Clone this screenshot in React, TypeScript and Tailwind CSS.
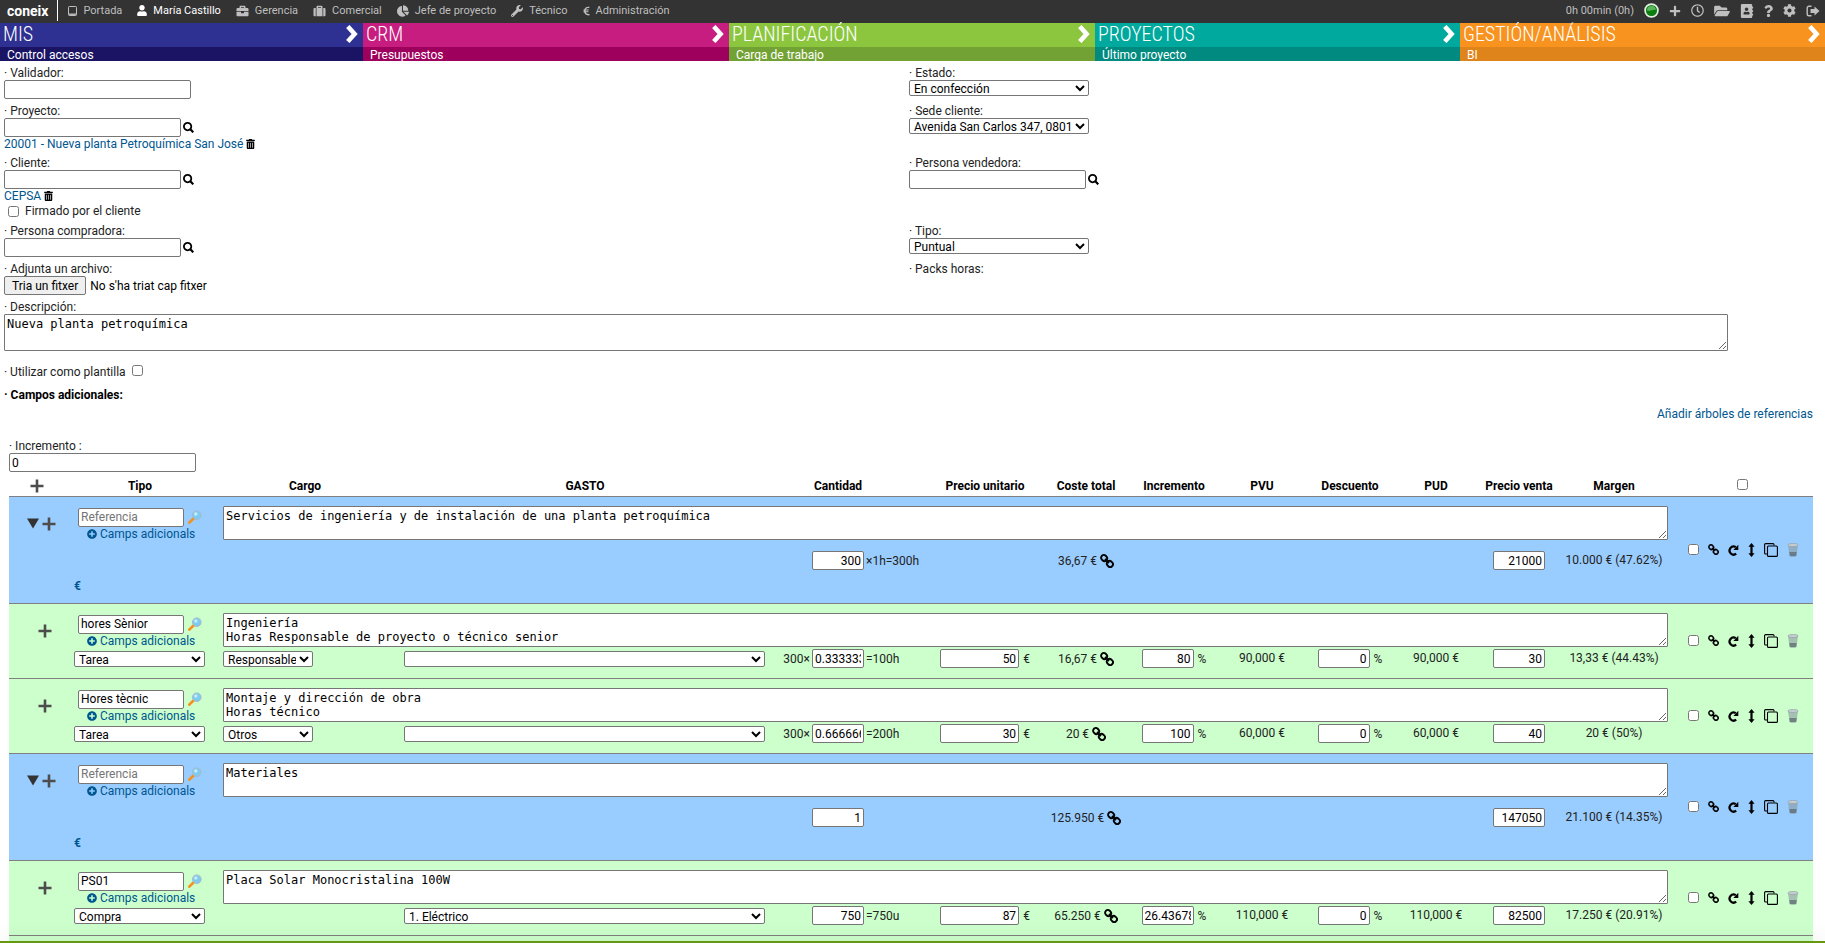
import { useRef, useState } from "react"
import type { ReactNode } from "react"
import {
  FaAddressBook,
  FaBriefcase,
  FaChartPie,
  FaCog,
  FaEuroSign,
  FaFolderOpen,
  FaPlus,
  FaPlusCircle,
  FaQuestion,
  FaRegClock,
  FaSuitcase,
  FaTrashAlt,
  FaUser,
  FaWrench,
} from "react-icons/fa"

const inputClass = "h-[19px] rounded-[2px] border border-[#767676] bg-white px-[2px] text-[12px] text-black"
const selectClass = "h-4 rounded-[2px] border border-[#767676] bg-white text-[12px] leading-[14px] text-black"
const areaClass =
  "block rounded-[1px] border border-[#767676] bg-white p-[2px] font-['DejaVu_Sans_Mono',monospace] text-[12px] leading-[14px] text-black"
const linkClass = "text-[#00568f]"

const navItems = [
  { label: "Portada", icon: <TabletIcon /> },
  { label: "María Castillo", icon: <FaUser className="h-[11px] w-[10px]" />, active: true },
  { label: "Gerencia", icon: <FaBriefcase className="h-3 w-[13px]" /> },
  { label: "Comercial", icon: <FaSuitcase className="h-3 w-[13px]" /> },
  { label: "Jefe de proyecto", icon: <FaChartPie className="h-3 w-3" /> },
  { label: "Técnico", icon: <FaWrench className="h-3 w-3" /> },
  { label: "Administración", icon: <FaEuroSign className="h-[10px] w-[7px]" /> },
]

const sections = [
  { title: "MIS", sub: "Control accesos", top: "bg-[#2e3192]", bottom: "bg-[#1b1464]" },
  { title: "CRM", sub: "Presupuestos", top: "bg-[#c71c80]", bottom: "bg-[#9e005d]" },
  { title: "PLANIFICACIÓN", sub: "Carga de trabajo", top: "bg-[#8cc63f]", bottom: "bg-[#73a234]" },
  { title: "PROYECTOS", sub: "Último proyecto", top: "bg-[#00a99d]", bottom: "bg-[#008a80]" },
  { title: "GESTIÓN/ANÁLISIS", sub: "BI", top: "bg-[#f7931e]", bottom: "bg-[#df831b]" },
]

type Line = {
  id: string
  group?: boolean
  reference: string
  text: string
  type?: string
  role?: string
  expense?: string
  before?: string
  quantity: string
  after?: string
  unitPrice?: string
  cost: string
  increment?: string
  pvu?: string
  discount?: string
  pud?: string
  price: string
  margin: string
}

const lines: Line[] = [
  {
    id: "l1",
    group: true,
    reference: "",
    text: "Servicios de ingeniería y de instalación de una planta petroquímica",
    quantity: "300",
    after: "×1h=300h",
    cost: "36,67 €",
    price: "21000",
    margin: "10.000 € (47.62%)",
  },
  {
    id: "l2",
    reference: "hores Sènior",
    text: "Ingeniería\nHoras Responsable de proyecto o técnico senior",
    type: "Tarea",
    role: "Responsable",
    expense: "",
    before: "300×",
    quantity: "0.33333333",
    after: "=100h",
    unitPrice: "50",
    cost: "16,67 €",
    increment: "80",
    pvu: "90,000 €",
    discount: "0",
    pud: "90,000 €",
    price: "30",
    margin: "13,33 € (44.43%)",
  },
  {
    id: "l3",
    reference: "Hores tècnic",
    text: "Montaje y dirección de obra\nHoras técnico",
    type: "Tarea",
    role: "Otros",
    expense: "",
    before: "300×",
    quantity: "0.66666667",
    after: "=200h",
    unitPrice: "30",
    cost: "20 €",
    increment: "100",
    pvu: "60,000 €",
    discount: "0",
    pud: "60,000 €",
    price: "40",
    margin: "20 € (50%)",
  },
  {
    id: "l4",
    group: true,
    reference: "",
    text: "Materiales",
    quantity: "1",
    cost: "125.950 €",
    price: "147050",
    margin: "21.100 € (14.35%)",
  },
  {
    id: "l5",
    reference: "PS01",
    text: "Placa Solar Monocristalina 100W",
    type: "Compra",
    expense: "1. Eléctrico",
    quantity: "750",
    after: "=750u",
    unitPrice: "87",
    cost: "65.250 €",
    increment: "26.43678161",
    pvu: "110,000 €",
    discount: "0",
    pud: "110,000 €",
    price: "82500",
    margin: "17.250 € (20.91%)",
  },
]

function TabletIcon() {
  return (
    <svg viewBox="0 0 9 10" className="h-[10px] w-[9px]" fill="none" stroke="currentColor">
      <rect x="0.5" y="0.5" width="8" height="9" rx="0.8" />
      <path d="M1 8.2h7" strokeWidth="1.4" />
    </svg>
  )
}

function SignOutIcon() {
  return (
    <svg viewBox="0 0 14 12" className="h-3 w-[14px]" fill="none" stroke="currentColor">
      <path d="M5.5 1.2H3A1.8 1.8 0 0 0 1.2 3v6A1.8 1.8 0 0 0 3 10.8h2.5" strokeWidth="1.4" />
      <path d="M8.5 1.5 13.5 6l-5 4.5V8H4.5V4h4z" fill="currentColor" stroke="none" />
    </svg>
  )
}

function PlusIcon() {
  return (
    <svg viewBox="0 0 14 14" className="h-[14px] w-[14px]" stroke="#4d4d4d" strokeWidth="2.6">
      <path d="M7 0.5v13M0.5 7h13" />
    </svg>
  )
}

function ChevronIcon() {
  return (
    <svg viewBox="0 0 12 18" className="h-[18px] w-3" fill="none" stroke="white" strokeWidth="4.6">
      <path d="M1.800 1.500 8.600 9l-6.800 7.500" />
    </svg>
  )
}

function SearchIcon() {
  return (
    <svg viewBox="0 0 11 11" className="h-[11px] w-[11px]" fill="none" stroke="black">
      <circle cx="4.600" cy="4.600" r="3.700" strokeWidth="1.800" />
      <path d="m7.300 7.300 3 3" strokeWidth="2.200" />
    </svg>
  )
}

function MagnifierIcon() {
  return (
    <svg viewBox="0 0 14 14" className="h-[14px] w-[14px] shrink-0">
      <path d="M1.300 12.700 5.500 8.500" stroke="#f5901d" strokeWidth="2.600" strokeLinecap="round" />
      <circle cx="8.800" cy="5.200" r="4.300" fill="#7ccbf0" stroke="#a9b9c6" strokeWidth="1" />
      <circle cx="7.800" cy="4" r="1.700" fill="#c6ecfb" />
    </svg>
  )
}

function ChainIcon({ className }: { className: string }) {
  return (
    <svg viewBox="0 0 14 14" className={className} fill="none" stroke="black" strokeWidth="1.9">
      <rect x="1" y="1.300" width="6.200" height="5.400" rx="2.600" transform="rotate(45 4.100 4)" />
      <rect x="6.800" y="7.300" width="6.200" height="5.400" rx="2.600" transform="rotate(45 9.900 10)" />
      <path d="m5 5 4 4" />
    </svg>
  )
}

function RefreshIcon() {
  return (
    <svg viewBox="0 0 11 12" className="h-3 w-[11px]" fill="none" stroke="black" strokeWidth="2.2">
      <path d="M8.200 9.600A4 4 0 1 1 7.800 3.200" />
      <path d="M10.300 0.800v5.200H5.400z" fill="black" stroke="none" />
    </svg>
  )
}

function MoveIcon() {
  return (
    <svg viewBox="0 0 7 14" className="h-[14px] w-[7px]">
      <path d="M3.500 0 6.600 3.800H4.600v6.400h2L3.500 14 .4 10.200h2V3.800h-2z" />
    </svg>
  )
}

function CopyIcon() {
  return (
    <svg viewBox="0 0 14 14" className="h-[14px] w-[14px]" fill="none" stroke="black" strokeWidth="1.1">
      <path d="M3 11H1.600a1 1 0 0 1-1-1V1.600a1 1 0 0 1 1-1h7.400a1 1 0 0 1 1 1v.9" />
      <rect x="3.500" y="3" width="9.900" height="10.400" rx="1" />
    </svg>
  )
}

function BinIcon() {
  return (
    <svg viewBox="0 0 12 14" className="h-[14px] w-3">
      <path d="M1 2h10L9.500 13.200a6 1 0 0 1-7 0z" fill="#8a98a0" fillOpacity="0.6" />
      <path d="M2.300 9h7.400l-.6 4a5 1 0 0 1-6.200 0z" fill="#59656c" fillOpacity="0.7" />
      <ellipse cx="6" cy="2" rx="5.200" ry="1.600" fill="#c3cdd2" stroke="#8e9aa0" strokeWidth="0.6" />
    </svg>
  )
}

function TopBar() {
  return (
    <header className="flex h-[23px] items-center justify-between bg-[#333] pr-[5px] pb-[2px] text-[11px] leading-4 text-[#bfbfbf]">
      <nav className="flex h-full items-center">
        <a href="#" className="mr-[10px] flex h-full items-center border-r border-white pr-[9px] pl-[7px] text-[14px] font-bold text-white">
          coneix
        </a>
        {navItems.map((item) => (
          <a key={item.label} href="#" className={`mr-[15px] flex items-center gap-[6px] ${item.active ? "text-white" : ""}`}>
            {item.icon}
            {item.label}
          </a>
        ))}
      </nav>
      <div className="flex items-center gap-[10px]">
        <span>0h 00min (0h)</span>
        <button aria-label="Estado">
          <svg viewBox="0 0 14 14" className="h-[15px] w-[15px]">
            <circle cx="7" cy="7" r="6" fill="#0a7d0f" stroke="#e3eee3" strokeWidth="1.6" />
            <path d="M2.800 7a4.200 4.200 0 0 1 8.400-.6C8 5.500 6 8 2.800 7z" fill="#5bb55e" />
          </svg>
        </button>
        <button aria-label="Añadir"><FaPlus className="h-3 w-3" /></button>
        <button aria-label="Horas"><FaRegClock className="h-[13px] w-[13px]" /></button>
        <button aria-label="Archivos"><FaFolderOpen className="h-[14px] w-4" /></button>
        <button aria-label="Contactos"><FaAddressBook className="h-[14px] w-[14px]" /></button>
        <button aria-label="Ayuda"><FaQuestion className="h-3 w-[9px]" /></button>
        <button aria-label="Configuración"><FaCog className="h-[13px] w-[13px]" /></button>
        <button aria-label="Salir"><SignOutIcon /></button>
      </div>
    </header>
  )
}

function SectionTabs() {
  return (
    <div className="grid grid-cols-[363fr_366fr_366fr_365fr_365fr]">
      {sections.map((s) => (
        <div key={s.title} className="text-white">
          <a href="#" className={`flex h-6 items-center justify-between pr-[5px] pb-[2px] pl-[3px] font-['Roboto_Condensed',Roboto,sans-serif] text-[20px] leading-[22px] font-light ${s.top}`}>
            {s.title}
            <ChevronIcon />
          </a>
          <a href="#" className={`block h-[14px] overflow-hidden pl-[7px] text-[12px] leading-4 ${s.bottom}`}>
            {s.sub}
          </a>
        </div>
      ))}
    </div>
  )
}

type FieldProps = { id: string; label: string; children: ReactNode }

function Field({ id, label, children }: FieldProps) {
  return (
    <div className="pb-[5px]">
      <label htmlFor={id} className="block leading-[14px]">
        · {label}
      </label>
      {children}
    </div>
  )
}

function LookupInput({ id }: { id: string }) {
  return (
    <div className="flex items-center gap-[2px]">
      <input id={id} type="text" className={`${inputClass} w-[177px]`} />
      <button type="button" aria-label="Buscar">
        <SearchIcon />
      </button>
    </div>
  )
}

function LinkedValue({ text }: { text: string }) {
  return (
    <div className="flex h-[14px] items-center gap-[3px]">
      <a href="#" className={linkClass}>{text}</a>
      <button type="button" aria-label={`Eliminar ${text}`}>
        <FaTrashAlt className="h-[10px] w-[9px] text-black" />
      </button>
    </div>
  )
}

function BudgetForm() {
  const fileRef = useRef<HTMLInputElement>(null)

  return (
    <form className="pt-[5px]">
      <div className="grid grid-cols-2 pr-[11px] pl-1">
        <Field id="validador" label="Validador:">
          <input id="validador" type="text" className={`${inputClass} block w-[187px]`} />
        </Field>
        <Field id="estado" label="Estado:">
          <select id="estado" className={`${selectClass} block w-[180px]`}>
            <option>En confección</option>
          </select>
        </Field>

        <Field id="proyecto" label="Proyecto:">
          <LookupInput id="proyecto" />
          <LinkedValue text="20001 - Nueva planta Petroquímica San José" />
        </Field>
        <Field id="sede" label="Sede cliente:">
          <select id="sede" className={`${selectClass} block w-[180px]`}>
            <option>Avenida San Carlos 347, 08012 Barcelona</option>
          </select>
        </Field>

        <Field id="cliente" label="Cliente:">
          <LookupInput id="cliente" />
          <LinkedValue text="CEPSA" />
          <label className="flex h-4 items-center gap-[6px] pl-1">
            <input type="checkbox" className="h-[11px] w-[11px]" />
            Firmado por el cliente
          </label>
        </Field>
        <Field id="vendedora" label="Persona vendedora:">
          <LookupInput id="vendedora" />
        </Field>

        <Field id="compradora" label="Persona compradora:">
          <LookupInput id="compradora" />
        </Field>
        <Field id="tipo" label="Tipo:">
          <select id="tipo" className={`${selectClass} block w-[180px]`}>
            <option>Puntual</option>
          </select>
        </Field>

        <Field id="archivo" label="Adjunta un archivo:">
          <div className="flex items-center gap-1 text-[12px] text-black">
            <input ref={fileRef} id="archivo" type="file" className="hidden" />
            <button
              type="button"
              onClick={() => fileRef.current?.click()}
              className="h-[19px] rounded-[2px] border border-[#767676] bg-[#efefef] px-[7px] leading-4"
            >
              Tria un fitxer
            </button>
            <span>No s'ha triat cap fitxer</span>
          </div>
        </Field>
        <div className="leading-[14px]">· Packs horas:</div>
      </div>

      <div className="pl-1">
        <label htmlFor="descripcion" className="block leading-[14px]">· Descripción:</label>
        <textarea id="descripcion" defaultValue="Nueva planta petroquímica" className={`${areaClass} h-[37px] w-[calc(95%-6px)]`} />
        <div className="flex items-start gap-[6px] pt-[14px] leading-[14px]">
          <label htmlFor="plantilla">· Utilizar como plantilla</label>
          <input id="plantilla" type="checkbox" className="h-[11px] w-[11px]" />
        </div>
        <h2 className="pt-[9px] leading-[14px] font-bold text-black">· Campos adicionales:</h2>
      </div>

      <div className="pt-[5px] pr-3 text-right leading-[14px]">
        <a href="#" className={linkClass}>Añadir árboles de referencias</a>
      </div>

      <div className="pt-[18px] pl-[9px]">
        <label htmlFor="incremento" className="block leading-[14px]">· Incremento :</label>
        <input id="incremento" type="text" defaultValue="0" className={`${inputClass} block w-[187px]`} />
      </div>
    </form>
  )
}

type AmountProps = { label: string; value: string; className: string }

function Amount({ label, value, className }: AmountProps) {
  return <input aria-label={label} defaultValue={value} className={`${inputClass} text-right ${className}`} />
}

function LineRows({ line }: { line: Line }) {
  const [open, setOpen] = useState(true)
  const color = line.group ? "bg-[#99ccff]" : "bg-[#ccffcc]"
  const pad = line.group ? "pt-[9px]" : ""

  return (
    <tbody className={`border-b border-[#808080] ${color}`}>
      <tr className="h-[46px] align-top">
        <td rowSpan={2} className="pt-5">
          <div className={`flex items-center gap-[3px] ${line.group ? "pl-[18px]" : "pl-[29px]"}`}>
            {line.group && (
              <button aria-label="Plegar" aria-expanded={open} onClick={() => setOpen(!open)}>
                <svg viewBox="0 0 12 11" className={`h-[11px] w-3 ${open ? "" : "-rotate-90"}`} fill="#333">
                  <path d="M0 0.500h12L6 10.500z" />
                </svg>
              </button>
            )}
            <button aria-label="Añadir línea"><PlusIcon /></button>
          </div>
        </td>
        <td className="pt-[11px] pl-[7px]">
          <div className="flex items-center gap-1">
            <input
              aria-label="Referencia"
              placeholder="Referencia"
              defaultValue={line.reference}
              className={`${inputClass} w-[106px] placeholder:text-[#757575]`}
            />
            <button aria-label="Buscar referencia"><MagnifierIcon /></button>
          </div>
          <a href="#" className={`flex items-center gap-[3px] pl-[9px] leading-[14px] ${linkClass}`}>
            <FaPlusCircle className="h-[10px] w-[10px]" />
            Camps adicionals
          </a>
        </td>
        <td colSpan={11} className="pt-[9px] pl-[14px]">
          <textarea aria-label="Descripción" defaultValue={line.text} className={`${areaClass} h-[34px] w-full overflow-hidden`} />
        </td>
        <td rowSpan={2} className="pl-5 align-middle">
          <div className="flex items-center gap-[9px]">
            <input aria-label="Seleccionar" type="checkbox" className="h-[11px] w-[11px]" />
            <button aria-label="Enlazar"><ChainIcon className="h-[11px] w-[11px]" /></button>
            <button aria-label="Recalcular"><RefreshIcon /></button>
            <button aria-label="Mover"><MoveIcon /></button>
            <button aria-label="Duplicar"><CopyIcon /></button>
            <button aria-label="Eliminar"><BinIcon /></button>
          </div>
        </td>
      </tr>
      <tr className={line.group ? "h-[61px] align-top" : "h-[29px] align-top"}>
        <td className="pl-[3px]">
          {line.group ? (
            <a href="#" className={`block pt-[37px] leading-[14px] font-bold ${linkClass}`}>€</a>
          ) : (
            <select aria-label="Tipo" className={`${selectClass} mt-[2px] block w-[131px]`}>
              <option>{line.type}</option>
            </select>
          )}
        </td>
        <td className="pl-[14px]">
          {line.role && (
            <select aria-label="Cargo" className={`${selectClass} mt-[2px] block w-[90px]`}>
              <option>{line.role}</option>
            </select>
          )}
        </td>
        <td className="pr-1 pl-[3px]">
          {line.expense !== undefined && (
            <select aria-label="Gasto" className={`${selectClass} mt-[2px] block w-full`}>
              <option>{line.expense}</option>
            </select>
          )}
        </td>
        <td className={pad}>
          <div className="flex items-center gap-[2px]">
            <span className="w-[41px] text-right">{line.before}</span>
            <Amount label="Cantidad" value={line.quantity} className="w-[52px]" />
            <span>{line.after}</span>
          </div>
        </td>
        <td>
          {line.unitPrice && (
            <div className="flex items-center justify-center gap-1">
              <Amount label="Precio unitario" value={line.unitPrice} className="w-[79px]" />€
            </div>
          )}
        </td>
        <td className={pad}>
          <div className="flex h-[19px] items-center justify-center gap-[3px]">
            {line.cost}
            <button aria-label="Ver coste"><ChainIcon className="h-[14px] w-[14px]" /></button>
          </div>
        </td>
        <td>
          {line.increment && (
            <div className="flex items-center justify-center gap-1">
              <Amount label="Incremento" value={line.increment} className="w-[52px]" />%
            </div>
          )}
        </td>
        <td className="text-center leading-[19px]">{line.pvu}</td>
        <td>
          {line.discount && (
            <div className="flex items-center justify-center gap-1">
              <Amount label="Descuento" value={line.discount} className="w-[52px]" />%
            </div>
          )}
        </td>
        <td className="text-center leading-[19px]">{line.pud}</td>
        <td className={`text-center ${pad}`}>
          <Amount label="Precio venta" value={line.price} className="mx-auto block w-[52px]" />
        </td>
        <td className={`text-center leading-[19px] ${pad}`}>{line.margin}</td>
      </tr>
    </tbody>
  )
}

function BudgetTable() {
  return (
    <div className="pr-3 pl-[9px]">
      <table className="w-full table-fixed border-collapse">
        <colgroup>
          <col className="w-[62px]" />
          <col className="w-[138px]" />
          <col className="w-[192px]" />
          <col />
          <col className="w-[159px]" />
          <col className="w-[114px]" />
          <col className="w-[88px]" />
          <col className="w-[88px]" />
          <col className="w-[88px]" />
          <col className="w-[88px]" />
          <col className="w-[84px]" />
          <col className="w-[82px]" />
          <col className="w-[108px]" />
          <col className="w-[145px]" />
        </colgroup>
        <thead className="border-b border-[#808080]">
          <tr className="h-6 align-bottom leading-[20px] text-black">
            <th className="pb-[3px] pl-[21px]">
              <button aria-label="Añadir" className="block"><PlusIcon /></button>
            </th>
            <th>Tipo</th>
            <th>Cargo</th>
            <th>GASTO</th>
            <th className="pr-[21px]">Cantidad</th>
            <th>Precio unitario</th>
            <th>Coste total</th>
            <th>Incremento</th>
            <th>PVU</th>
            <th>Descuento</th>
            <th>PUD</th>
            <th>Precio venta</th>
            <th>Margen</th>
            <th className="pb-[6px] pl-1">
              <input aria-label="Seleccionar todo" type="checkbox" className="mx-auto block h-[11px] w-[11px]" />
            </th>
          </tr>
        </thead>
        {lines.map((line) => (
          <LineRows key={line.id} line={line} />
        ))}
        <tbody className="bg-[#ccffcc]">
          <tr className="h-[75px]">
            <td colSpan={14} />
          </tr>
        </tbody>
      </table>
    </div>
  )
}

export default function App() {
  return (
    <div className="flex h-screen flex-col overflow-hidden bg-white font-[Roboto,sans-serif] text-[12px] text-[#222]">
      <TopBar />
      <SectionTabs />
      <main className="min-h-0 flex-1 overflow-hidden">
        <BudgetForm />
        <BudgetTable />
      </main>
      <footer className="relative h-[2px] shrink-0 bg-[#669911] shadow-[0_0_18px_rgba(0,0,0,0.3)]" />
    </div>
  )
}
